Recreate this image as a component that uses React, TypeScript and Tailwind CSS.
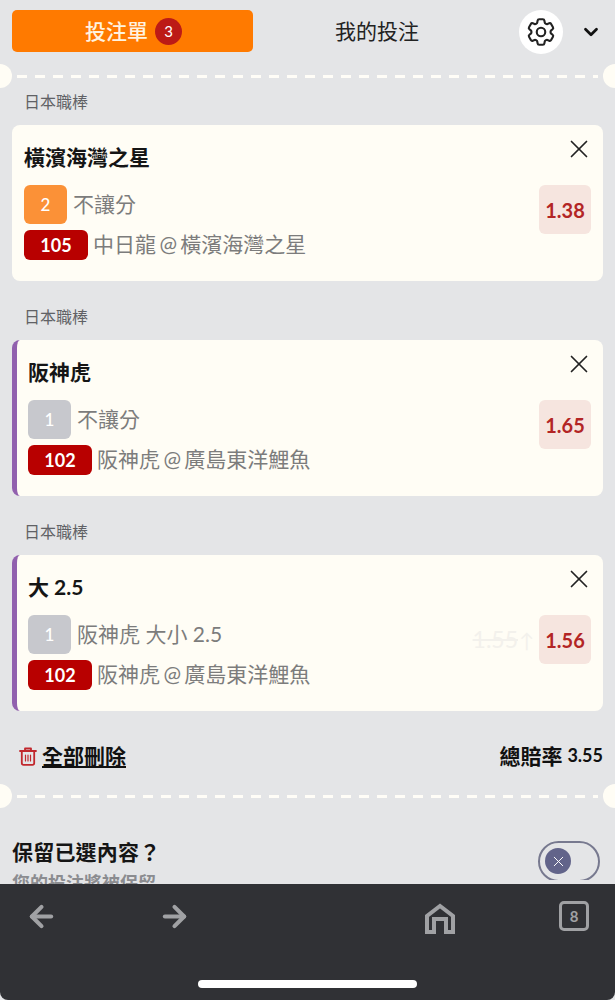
import React from "react";
import { X, ChevronDown, ArrowLeft, ArrowRight } from "lucide-react";
import { HiOutlineCog6Tooth } from "react-icons/hi2";

const FONT = "font-['Lato','Noto_Sans_CJK_TC','Noto_Sans_CJK_SC',sans-serif]";

function Divider() {
  return (
    <div className="relative h-6 w-full">
      <div className="absolute left-[17px] right-[17px] top-[11px] h-[3px] bg-[repeating-linear-gradient(90deg,#fffdf7_0_10px,transparent_10px_18px)]" />
      <div className="absolute -left-[12px] top-0 h-6 w-6 rounded-full bg-[#fffdf5]" />
      <div className="absolute -right-[12px] top-0 h-6 w-6 rounded-full bg-[#fffdf5]" />
    </div>
  );
}

type BetProps = {
  title: string;
  score: string;
  scoreBg: string;
  market: string;
  code: string;
  teams: string;
  odds: string;
  accent?: boolean;
  oldOdds?: string;
};

function Bet({ title, score, scoreBg, market, code, teams, odds, accent, oldOdds }: BetProps) {
  return (
    <section className="flex flex-col">
      <div className="h-[24px] pl-[24px] text-[16px] leading-[24px] text-[#606165]">日本職棒</div>
      <div
        className={`relative mx-3 mt-[11px] h-[156px] rounded-lg bg-[#fffdf5] pr-3 pt-[18px] ${
          accent ? "border-l-[5px] border-[#9160ae] pl-[11px]" : "pl-3"
        }`}
      >
        <div className="h-[28px] text-[21px] font-bold leading-[28px] text-[#151515]">{title}</div>
        <div className="mt-[14px] flex items-center gap-[6px]">
          <div
            className={`flex h-[39px] w-[43px] items-center justify-center rounded-md text-[17px] font-medium text-white ${scoreBg}`}
          >
            {score}
          </div>
          <span className="-mt-[3px] text-[21px] leading-[39px] text-[#7c7c7c]">{market}</span>
        </div>
        <div className="mt-[6px] flex items-center gap-[6px]">
          <div className="flex h-[30px] w-[64px] items-center justify-center rounded-md bg-[#b80000] text-[18px] font-bold text-white">
            {code}
          </div>
          <span className="-ml-[1px] -mt-[2px] text-[21px] leading-[30px] text-[#7c7c7c] [word-spacing:-2px]">{teams}</span>
        </div>
        <X
          className="absolute right-[9px] top-[9px] h-[30px] w-[30px] text-[#222]"
          strokeWidth={1.35}
        />
        <div className="absolute right-3 top-[60px] flex items-center gap-[5px]">
          {oldOdds && (
            <span className="flex items-center text-[23px] text-[#f3f1ec]">
              <span className="line-through">{oldOdds}</span>
              <span className="ml-[1px] text-[20px]">↑</span>
            </span>
          )}
          <div className="flex h-[49px] w-[52px] items-center justify-center rounded-md bg-[#f6e5df] text-[20px] font-bold text-[#b32525]">
            {odds}
          </div>
        </div>
      </div>
    </section>
  );
}

export default function App() {
  return (
    <div className={`flex h-[1000px] w-[615px] flex-col overflow-hidden bg-[#e4e5e7] ${FONT}`}>
      <main className="flex h-[884px] flex-col overflow-hidden">
        <header className="flex items-start pl-3 pr-[13px] pt-[10px]">
          <div className="flex h-[42px] w-[241px] items-center justify-center gap-[7px] rounded-[5px] bg-[#ff7a00] pl-[2px]">
            <span className="text-[21px] font-medium text-[#fff3e0]">投注單</span>
            <span className="flex h-[27px] w-[27px] items-center justify-center rounded-full bg-[#bc1a16] text-[15px] text-white">
              3
            </span>
          </div>
          <div className="flex h-[42px] flex-1 items-center justify-center pr-[18px] text-[21px] text-[#222]">
            我的投注
          </div>
          <div className="flex items-center">
            <div className="flex h-[44px] w-[44px] items-center justify-center rounded-full bg-white">
              <HiOutlineCog6Tooth className="h-[34px] w-[34px] text-[#222]" />
            </div>
            <ChevronDown className="ml-[17px] h-[22px] w-[22px] text-[#111]" strokeWidth={3} />
          </div>
        </header>
        <div className="mt-[10px]">
          <Divider />
        </div>
        <div className="mt-[2px] flex flex-col gap-[24px]">
          <Bet
            title="橫濱海灣之星"
            score="2"
            scoreBg="bg-[#fb9137]"
            market="不讓分"
            code="105"
            teams="中日龍 @ 橫濱海灣之星"
            odds="1.38"
          />
          <Bet
            title="阪神虎"
            score="1"
            scoreBg="bg-[#c7c8cd]"
            market="不讓分"
            code="102"
            teams="阪神虎 @ 廣島東洋鯉魚"
            odds="1.65"
            accent
          />
          <Bet
            title="大 2.5"
            score="1"
            scoreBg="bg-[#c7c8cd]"
            market="阪神虎 大小 2.5"
            code="102"
            teams="阪神虎 @ 廣島東洋鯉魚"
            odds="1.56"
            oldOdds="1.55"
            accent
          />
        </div>
        <div className="mt-[29px] flex h-[34px] items-center justify-between pl-[18px] pr-3">
          <div className="flex items-center gap-[4px]">
            <svg
              className="h-[20px] w-[20px]"
              viewBox="0 0 20 20"
              fill="none"
              stroke="#c1272d"
              strokeWidth="1.8"
              strokeLinecap="round"
              strokeLinejoin="round"
            >
              <path d="M2 5h16M7 5V2.5h6V5M3.8 5v12a1.8 1.8 0 0 0 1.8 1.8h8.8a1.8 1.8 0 0 0 1.8-1.8V5" />
              <path d="M7.5 9v6M10 9v6M12.5 9v6" strokeWidth="1.2" />
            </svg>
            <span className="text-[21px] font-bold leading-[26px] text-[#111] underline underline-offset-2">
              全部刪除
            </span>
          </div>
          <div className="flex items-center gap-[5px] text-[#111]">
            <span className="text-[21px] font-bold">總賠率</span>
            <span className="text-[18px] font-bold">3.55</span>
          </div>
        </div>
        <div className="mt-[12px]">
          <Divider />
        </div>
        <div className="mt-[30px] flex items-start justify-between pl-3 pr-[15px]">
          <div className="flex flex-col">
            <span className="text-[21px] font-bold leading-[28px] tracking-[0.2px] text-[#151515]">
              保留已選內容？
            </span>
            <span className="mt-[5px] text-[18px] font-bold leading-[24px] text-[#8b8c90]">您的投注將被保留</span>
          </div>
          <div className="mt-[3px] h-[39px] overflow-hidden">
            <div className="flex h-[41px] w-[62px] items-center rounded-full border-2 border-[#77798f] pl-[5px]">
              <div className="flex h-[26px] w-[26px] items-center justify-center rounded-full bg-[#62648a]">
                <X className="h-[17px] w-[17px] text-white" strokeWidth={1.4} />
              </div>
            </div>
          </div>
        </div>
      </main>
      <footer className="relative h-[116px] rounded-b-[8px] bg-[#303135] text-[#a0a1a4]">
        <ArrowLeft className="absolute left-[25px] top-[16px] h-[33px] w-[33px]" strokeWidth={3} />
        <ArrowRight className="absolute left-[158px] top-[16px] h-[33px] w-[33px]" strokeWidth={3} />
        <svg
          className="absolute left-[425px] top-[19px] h-[31px] w-[30px]"
          viewBox="0 0 30 31"
          fill="none"
          stroke="#a0a1a4"
          strokeWidth="4"
        >
          <path d="M2 29V13L15 3l13 10v16h-7V16H9v13z" />
        </svg>
        <div className="absolute left-[559px] top-[17px] flex h-[30px] w-[30px] items-center justify-center rounded-[5px] border-[3px] border-[#a0a1a4] text-[15px] font-bold">
          8
        </div>
        <div className="absolute left-[198px] top-[96px] h-[8px] w-[219px] rounded-full bg-white" />
      </footer>
    </div>
  );
}
